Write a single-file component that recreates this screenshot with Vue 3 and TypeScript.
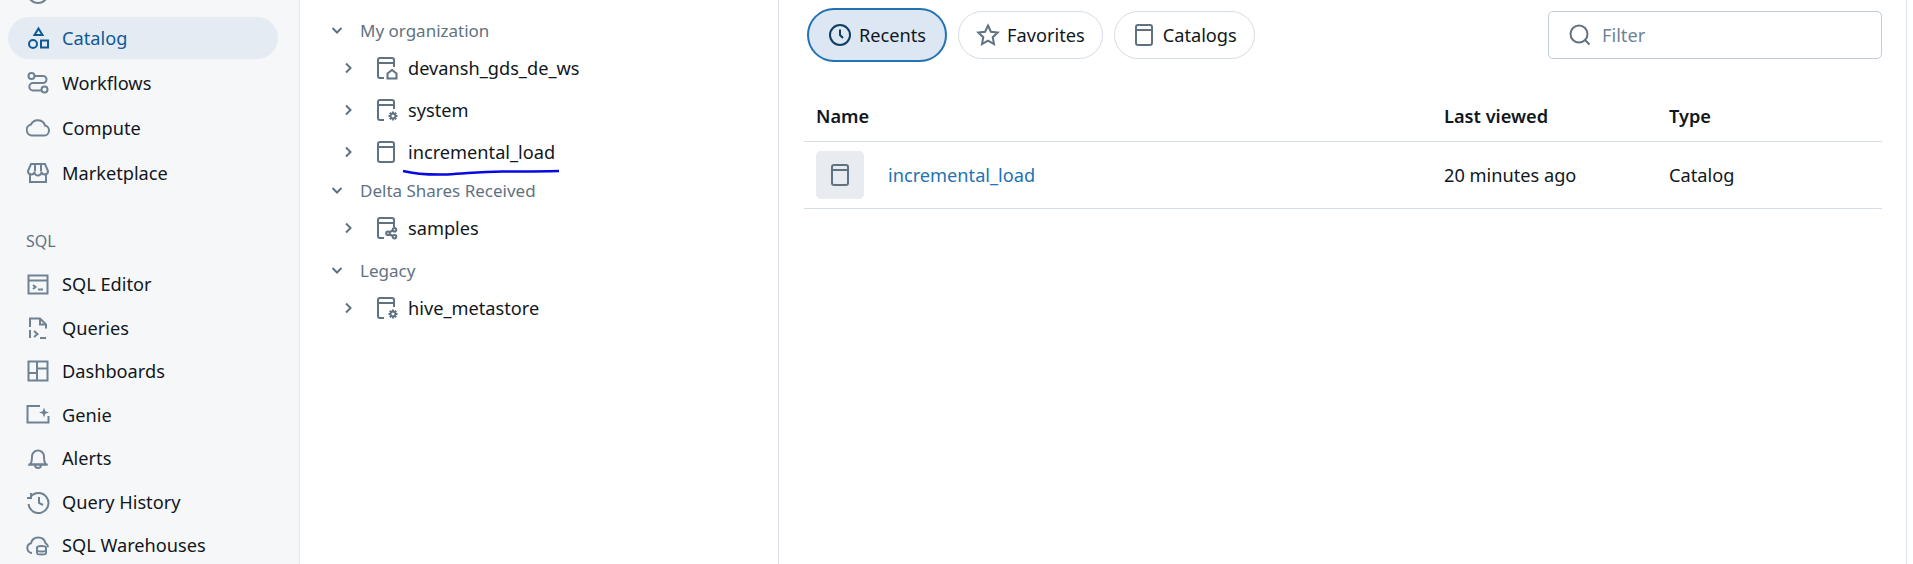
<script setup lang="ts">
type NavItem = { label: string; icon: string; active?: boolean }
type TreeRow = { label: string; icon: string; group?: boolean; spaced?: boolean }

const book = 'M10 22H6a2 2 0 0 1-2-2V4a2 2 0 0 1 2-2h12a2 2 0 0 1 2 2v7'
const gear = 'M19 15.500a2.500 2.500 0 1 0 0 5a2.500 2.500 0 1 0 0-5M19 13.500v1.500M19 21v1.500M14.500 18H16M22 18h1.500M15.800 14.800l1 1M21.200 20.200l1 1M15.800 21.200l1-1M21.200 15.800l1-1'

// stroke paths for each icon, drawn on a 24 box
const icons: Record<string, string[]> = {
  clock: ['M12 2a10 10 0 1 0 0 20a10 10 0 1 0 0-20', 'M12 6.500V12l3 3'],
  catalogNav: ['M12.500 2.500l4 6.500h-8z', 'M7 14a4 4 0 1 0 0 8a4 4 0 1 0 0-8', 'M15 14.500h7v7h-7z'],
  workflows: [
    'M5.500 2a3 3 0 1 0 0 6a3 3 0 1 0 0-6',
    'M18.500 15.500a3 3 0 1 0 0 6a3 3 0 1 0 0-6',
    'M8.500 5h8.500a3.500 3.500 0 0 1 0 7H7a3.700 3.700 0 0 0 0 7.400h8.500',
  ],
  cloud: ['M7 19.500h11a5 5 0 0 0 1-9.900a7.500 7.500 0 0 0-14-1.100A5.600 5.600 0 0 0 7 19.500z'],
  market: [
    'M4 12v9h16v-9',
    'M5 3h14l3 7a3.300 3.300 0 0 1-6.500 1a3.500 3.500 0 0 1-7 0a3.300 3.300 0 0 1-6.500-1z',
    'M9 3.500v7M15 3.500v7',
  ],
  editor: ['M2.500 3.500h19v18h-19z', 'M2.500 8.500h19', 'M7 13l2.500 2L7 17', 'M12 17.500h5'],
  queries: ['M4 11V2.500h10l6 6v4', 'M14 2.500v6h6', 'M4 14v8', 'M8 15l3.500 3L8 21', 'M14 22h6'],
  dashboards: ['M2.500 2.500h19v19h-19z', 'M11 2.500v19', 'M2.500 14h8.500', 'M11 9.500h10.500'],
  genie: ['M14 3H1.500v16.500h21V13'],
  bell: ['M4 18.500c2-2 2-4 2-8a6 6 0 0 1 12 0c0 4 0 6 2 8z', 'M2.500 18.500h19', 'M9 19a3 3 0 0 0 6 0'],
  history: ['M4.500 7a10 10 0 1 1-2 7', 'M5 3v5h-4', 'M13 7v6l4 2'],
  warehouse: [
    'M6 20a5 5 0 0 1-1-9.800a7.500 7.500 0 0 1 14.500 0a5 5 0 0 1 2.500 4',
    'M11 14.500c0-2 9-2 9 0v5.500c0 2-9 2-9 0z',
    'M11 17c0 2 9 2 9 0',
  ],
  catalog: ['M6 2h12a2 2 0 0 1 2 2v16a2 2 0 0 1-2 2H6a2 2 0 0 1-2-2V4a2 2 0 0 1 2-2z', 'M4 7h16'],
  catalogHome: [book, 'M4 7h16', 'M13.500 22.500v-5l4.500-3.500l4.500 3.500v5z'],
  catalogGear: [book, 'M4 7h16', gear],
  catalogShare: [
    book,
    'M4 7h16',
    'M20.500 12a1.800 1.800 0 1 0 0 3.600a1.800 1.800 0 1 0 0-3.600',
    'M20.500 19a1.800 1.800 0 1 0 0 3.600a1.800 1.800 0 1 0 0-3.600',
    'M14 15.500a1.800 1.800 0 1 0 0 3.600a1.800 1.800 0 1 0 0-3.600',
    'M15.800 16l3-1.500M15.800 18.500l3 1.500',
  ],
  star: ['M12 2.500l2.900 6.200l6.800.8l-5 4.700l1.300 6.800L12 17.600L6 21l1.300-6.800l-5-4.700l6.800-.8z'],
  search: ['M11 2.500a8.500 8.500 0 1 0 0 17a8.500 8.500 0 1 0 0-17', 'M17 17l4.500 4.500'],
}

const topNav: NavItem[] = [
  { label: 'Recents', icon: 'clock' },
  { label: 'Catalog', icon: 'catalogNav', active: true },
  { label: 'Workflows', icon: 'workflows' },
  { label: 'Compute', icon: 'cloud' },
  { label: 'Marketplace', icon: 'market' },
]

const sqlNav: NavItem[] = [
  { label: 'SQL Editor', icon: 'editor' },
  { label: 'Queries', icon: 'queries' },
  { label: 'Dashboards', icon: 'dashboards' },
  { label: 'Genie', icon: 'genie' },
  { label: 'Alerts', icon: 'bell' },
  { label: 'Query History', icon: 'history' },
  { label: 'SQL Warehouses', icon: 'warehouse' },
]

const tree: TreeRow[] = [
  { label: 'My organization', icon: '', group: true },
  { label: 'devansh_gds_de_ws', icon: 'catalogHome' },
  { label: 'system', icon: 'catalogGear' },
  { label: 'incremental_load', icon: 'catalog' },
  { label: 'Delta Shares Received', icon: '', group: true },
  { label: 'samples', icon: 'catalogShare' },
  { label: 'Legacy', icon: '', group: true, spaced: true },
  { label: 'hive_metastore', icon: 'catalogGear' },
]

const chips = [
  { label: 'Recents', icon: 'clock', active: true },
  { label: 'Favorites', icon: 'star', active: false },
  { label: 'Catalogs', icon: 'catalog', active: false },
]
</script>

<template>
  <div class="page">
    <nav class="sidebar">
      <div class="nav-list top">
        <a v-for="item in topNav" :key="item.label" class="nav-item" :class="{ active: item.active }">
          <svg class="icon" viewBox="0 0 24 24"><path v-for="d in icons[item.icon]" :key="d" :d="d" /></svg>
          {{ item.label }}
        </a>
      </div>
      <div class="nav-heading">SQL</div>
      <div class="nav-list sql">
        <a v-for="item in sqlNav" :key="item.label" class="nav-item">
          <svg class="icon" viewBox="0 0 24 24">
            <path v-for="d in icons[item.icon]" :key="d" :d="d" />
            <path v-if="item.icon === 'genie'" class="solid" d="M18 4.500l1.300 3.700l3.700 1.300l-3.700 1.300l-1.300 3.700l-1.300-3.700l-3.700-1.300l3.700-1.300z" />
          </svg>
          {{ item.label }}
        </a>
      </div>
    </nav>

    <aside class="tree">
      <template v-for="row in tree" :key="row.label">
        <div v-if="row.group" class="tree-group" :class="{ spaced: row.spaced }">
          <svg class="chev" viewBox="0 0 16 16"><path d="M3.500 6l4.500 4.500L12.500 6" /></svg>
          {{ row.label }}
        </div>
        <div v-else class="tree-row">
          <svg class="chev" viewBox="0 0 16 16"><path d="M6 3.500l4.500 4.500L6 12.500" /></svg>
          <svg class="icon" viewBox="0 0 24 24"><path v-for="d in icons[row.icon]" :key="d" :d="d" /></svg>
          <span class="tree-label">{{ row.label }}</span>
          <svg v-if="row.label === 'incremental_load'" class="scribble" viewBox="0 0 160 8">
            <path d="M1 2c12 3 26 4 44 3.500c22-1 30-3 56-3c22 0 38 0 56-.5" />
          </svg>
        </div>
      </template>
    </aside>

    <main class="main">
      <div class="toolbar">
        <button v-for="chip in chips" :key="chip.label" class="chip" :class="{ on: chip.active }">
          <svg class="icon" viewBox="0 0 24 24"><path v-for="d in icons[chip.icon]" :key="d" :d="d" /></svg>
          {{ chip.label }}
        </button>
        <label class="filter">
          <svg class="icon" viewBox="0 0 24 24"><path v-for="d in icons.search" :key="d" :d="d" /></svg>
          <input type="text" placeholder="Filter" />
        </label>
      </div>

      <div class="table">
        <div class="row head">
          <div>Name</div>
          <div>Last viewed</div>
          <div>Type</div>
        </div>
        <div class="row body">
          <div class="name-cell">
            <span class="thumb">
              <svg class="icon" viewBox="0 0 24 24"><path v-for="d in icons.catalog" :key="d" :d="d" /></svg>
            </span>
            <a class="link">incremental_load</a>
          </div>
          <div>20 minutes ago</div>
          <div>Catalog</div>
        </div>
      </div>
    </main>
  </div>
</template>

<style scoped>
.page {
  display: flex;
  height: 564px;
  overflow: hidden;
  background: #fff;
  color: #11171c;
  font-family: "Noto Sans", "Open Sans", sans-serif;
  font-size: 18.2px;
}

.icon {
  width: 24px;
  height: 24px;
  flex: none;
  fill: none;
  stroke: #6f8294;
  stroke-width: 2;
}

.solid {
  fill: #6f8294;
  stroke: none;
}

/* sidebar is scrolled, the first item is cut by the top edge */
.sidebar {
  width: 300px;
  flex: none;
  box-sizing: border-box;
  padding: 0 21px 0 8px;
  background: #f6f7f9;
  border-right: 1px solid #e3e7ec;
}

.nav-list {
  display: flex;
  flex-direction: column;
}

.nav-list.top {
  margin-top: -28px;
  gap: 3px;
}

.nav-list.sql {
  gap: 1.500px;
}

.nav-item {
  display: flex;
  align-items: center;
  gap: 12px;
  height: 42px;
  padding-left: 18px;
  border-radius: 21px;
  color: #11171c;
}

.nav-item.active {
  background: #e4ebf2;
  color: #0e5a96;
}

.nav-item.active .icon {
  stroke: #0e5a96;
}

.nav-heading {
  margin: 35px 0 10px 18px;
  height: 24px;
  line-height: 24px;
  font-size: 16px;
  color: #5f7281;
}

.tree {
  width: 479px;
  flex: none;
  box-sizing: border-box;
  padding: 13px 0 0 29px;
  border-right: 1px solid #d9dfe6;
}

.tree-group {
  display: flex;
  align-items: center;
  height: 34px;
  gap: 15px;
  font-size: 17px;
  color: #5f7281;
}

.tree-group.spaced {
  margin-top: 4px;
}

.tree-row {
  position: relative;
  display: flex;
  align-items: center;
  height: 42px;
  padding-left: 11px;
}

.tree-row .icon {
  margin-left: 18px;
  margin-right: 10px;
  stroke: #5f7281;
}

.chev {
  width: 16px;
  height: 16px;
  flex: none;
  fill: none;
  stroke: #5f7281;
  stroke-width: 2;
}

.scribble {
  position: absolute;
  left: 73px;
  top: 38px;
  width: 160px;
  height: 8px;
  fill: none;
  stroke: #0808e0;
  stroke-width: 2.500;
}

.main {
  width: 1128px;
  flex: none;
  box-sizing: border-box;
  padding: 8px 24px 0 25px;
  border-right: 1px solid #dde3ea;
}

.toolbar {
  display: flex;
  align-items: center;
  gap: 11px;
  margin-left: 3px;
}

.chip {
  display: flex;
  align-items: center;
  gap: 7px;
  height: 48px;
  padding: 0 17px;
  border: 1px solid #d5dde6;
  border-radius: 24px;
  background: #fff;
  color: #11171c;
  font: inherit;
}

.chip .icon {
  stroke: #5f7281;
}

.chip.on {
  height: 54px;
  padding: 0 19px;
  border: 2.500px solid #2272b4;
  border-radius: 27px;
  background: #dce7f3;
}

.chip.on .icon {
  stroke: #0d3d63;
}

.filter {
  display: flex;
  align-items: center;
  gap: 10px;
  width: 334px;
  height: 48px;
  box-sizing: border-box;
  margin-left: auto;
  padding-left: 19px;
  border: 1px solid #c0ccd8;
  border-radius: 5px;
}

.filter input {
  width: 200px;
  border: none;
  outline: none;
  padding: 0;
  font: inherit;
  background: none;
}

.filter input::placeholder {
  color: #6f8294;
}

.filter .icon {
  stroke: #5f7281;
}

.table {
  margin-top: 28px;
}

.row {
  display: grid;
  grid-template-columns: 628px 225px 1fr;
  align-items: center;
  padding-left: 12px;
  border-bottom: 1px solid #d5dde6;
}

.row.head {
  height: 51px;
  font-weight: 600;
}

.row.body {
  height: 66px;
}

.name-cell {
  display: flex;
  align-items: center;
  gap: 24px;
}

.thumb {
  display: flex;
  align-items: center;
  justify-content: center;
  width: 48px;
  height: 48px;
  border-radius: 5px;
  background: #e8ebef;
}

.thumb .icon {
  stroke: #5f7281;
}

.link {
  color: #2272b4;
}
</style>

<style>
html,
body {
  background: #f8f9fb;
}
</style>
